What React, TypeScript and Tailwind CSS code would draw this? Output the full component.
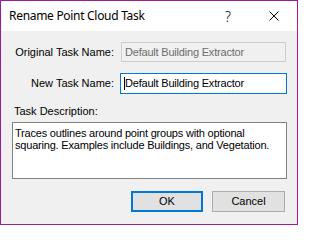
import React from "react";

export default function App() {
  return (
    <div
      className="w-[298px] h-[225px] border border-[#a0199c] bg-[#f0f0f0] flex flex-col overflow-hidden"
      style={{ fontFamily: '"Liberation Sans", Arial, sans-serif' }}
    >
      <div className="h-[30px] bg-white flex items-center shrink-0">
        <div
          className="pl-[8px] text-[12px] tracking-[-0.3px] text-black flex-1"
          style={{ fontFamily: '"Noto Sans", "Open Sans", sans-serif' }}
        >
          Rename Point Cloud Task
        </div>
        <div
          className="w-[46px] h-[30px] flex items-center justify-center text-[14px] font-light text-black"
          style={{ fontFamily: '"Noto Sans", sans-serif' }}
        >
          ?
        </div>
        <div className="w-[46px] h-[30px] flex items-center justify-center">
          <svg width="10" height="10" viewBox="0 0 10 10">
            <path d="M0.5 0.5 L9.5 9.5 M9.5 0.5 L0.5 9.5" stroke="#000" strokeWidth="1" fill="none" />
          </svg>
        </div>
      </div>

      <div className="flex items-center mt-[11px] h-[20px] text-[11px] text-black">
        <div className="w-[113px] text-right leading-[13px]">Original Task Name:</div>
        <div className="ml-[7px] w-[165px] h-[20px] border border-[#cccccc] bg-[#f0f0f0] text-[#6d6d6d] flex items-center pl-[3px] leading-[13px] tracking-[-0.2px]">
          Default Building Extractor
        </div>
      </div>

      <div className="flex items-center mt-[11px] h-[21px] text-[11px] text-black">
        <div className="w-[113px] text-right leading-[13px]">New Task Name:</div>
        <div className="ml-[6px] w-[167px] h-[21px] border border-[#0078d7] bg-white flex items-center pl-[3px] leading-[13px] tracking-[-0.2px]">
          <span className="w-px h-[13px] bg-black"></span>
          Default Building Extractor
        </div>
      </div>

      <div className="mt-[11px] ml-[13px] text-[11px] leading-[13px] text-black">Task Description:</div>

      <div className="mt-[4px] ml-[11px] w-[275px] h-[57px] border border-[#828282] bg-white px-[2px] pt-[4px] text-[11px] leading-[12px] tracking-[-0.2px] text-black">
        Traces outlines around point groups with optional squaring. Examples include Buildings, and Vegetation.
      </div>

      <div className="mt-[12px] flex text-[11px] text-black">
        <div className="ml-[130px] w-[72px] h-[21px] border-2 border-[#0078d7] bg-[#e1e1e1] flex items-center justify-center">
          OK
        </div>
        <div className="ml-[9px] w-[73px] h-[21px] border border-[#adadad] bg-[#e1e1e1] flex items-center justify-center">
          Cancel
        </div>
      </div>
    </div>
  );
}
